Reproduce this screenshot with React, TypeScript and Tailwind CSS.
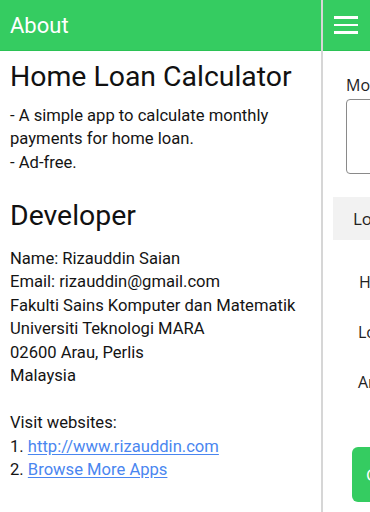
import React from 'react';

const body = "text-[16.6px] leading-[23.5px] text-[#141414]";

export default function App() {
  return (
    <div className="flex h-[512px] w-full overflow-hidden bg-white font-['Roboto',sans-serif]">
      {/* left: about page */}
      <div className="flex w-[321px] shrink-0 flex-col">
        <div className="flex h-[51px] items-center border-b border-[#2bc255] bg-[#35cc61] px-[10px]">
          <span className="text-[22px] text-white">About</span>
        </div>
        <div className="px-[10px] pt-[9px]">
          <h1 className="text-[28.4px] leading-[33.6px] text-[#111]">Home Loan Calculator</h1>
          <p className={`mt-[10px] ${body}`}>
            - A simple app to calculate monthly payments for home loan.
            <br />- Ad-free.
          </p>
          <h2 className="mt-[25px] text-[28.4px] leading-[33.6px] text-[#111]">Developer</h2>
          <div className={`mt-[14px] ${body}`}>
            <div>Name: Rizauddin Saian</div>
            <div>Email: rizauddin@gmail.com</div>
            <div>Fakulti Sains Komputer dan Matematik</div>
            <div>Universiti Teknologi MARA</div>
            <div>02600 Arau, Perlis</div>
            <div>Malaysia</div>
            <div>&nbsp;</div>
            <div>Visit websites:</div>
            <div>
              1. <a className="text-[#4a86f0] underline underline-offset-2">http://www.rizauddin.com</a>
            </div>
            <div>
              2. <a className="text-[#4a86f0] underline underline-offset-2">Browse More Apps</a>
            </div>
          </div>
        </div>
      </div>

      {/* divider */}
      <div className="w-[2px] shrink-0 bg-[#d6d6d6]" />

      {/* right: calculator, mostly off-screen */}
      <div className="flex min-w-0 flex-1 flex-col overflow-hidden font-['Open_Sans',sans-serif]">
        <div className="flex h-[51px] w-[300px] items-center border-b border-[#2bc255] bg-[#35cc61] pl-[11px]">
          <div className="flex w-[24px] flex-col gap-[5px]">
            <div className="h-[2.5px] bg-white" />
            <div className="h-[2.5px] bg-white" />
            <div className="h-[2.5px] bg-white" />
          </div>
        </div>
        <div className="w-[300px]">
          <div className="ml-[23px] mt-[24px] text-[16px] leading-[21px] text-[#222]">Monthly Payment</div>
          <div className="ml-[23px] mt-[3px] h-[75px] rounded-[4px] border border-[#8a8a8a]" />
          <div className="ml-[10px] mt-[23px] flex h-[43px] items-center bg-[#f2f2f2] pl-[20px] text-[17px] text-[#222]">
            Loan Details
          </div>
          <div className="mt-[17px] text-[16px] text-[#222]">
            <div className="flex h-[50px] items-center pl-[36px]">House Price</div>
            <div className="flex h-[50px] items-center pl-[35px]">Loan Period</div>
            <div className="flex h-[50px] items-center pl-[35px]">Annual Interest</div>
          </div>
          <div className="ml-[29px] mt-[40px] flex h-[55px] items-center rounded-[6px] bg-[#35cc61] pl-[14px] text-[17px] text-white">
            CALCULATE
          </div>
        </div>
      </div>
    </div>
  );
}
